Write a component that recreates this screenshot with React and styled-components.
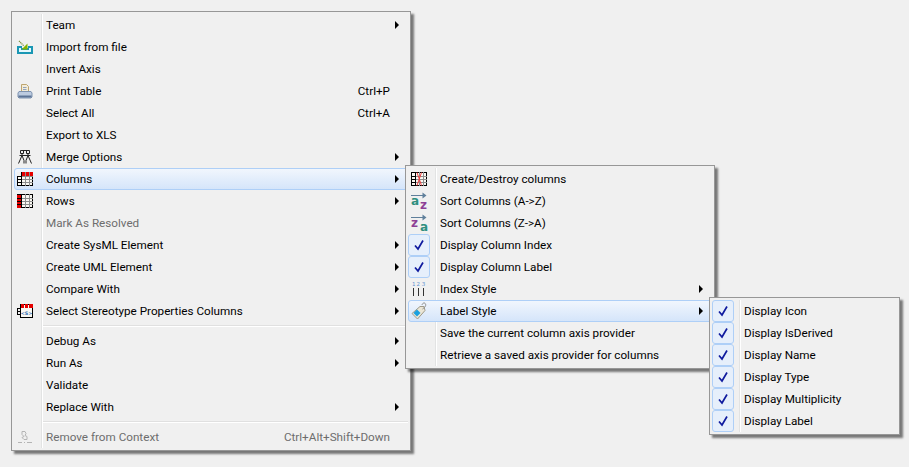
import styled, { createGlobalStyle } from 'styled-components';

const GlobalStyle = createGlobalStyle`
  html, body {
    margin: 0;
    background: #f0f0f0;
  }
  body {
    width: 909px;
    height: 467px;
    overflow: hidden;
    font-family: Roboto, "Noto Sans", sans-serif;
    font-size: 11.7px;
    color: #000;
  }
`;

const Page = styled.div`
  position: relative;
  width: 909px;
  height: 467px;
`;

const Menu = styled.div`
  position: absolute;
  left: ${(p) => p.$left}px;
  top: ${(p) => p.$top}px;
  width: ${(p) => p.$width}px;
  box-sizing: border-box;
  padding: 2px;
  border: 1px solid #979797;
  box-shadow: 3px 3px 2px rgba(0, 0, 0, 0.5);
  background:
    linear-gradient(#e2e3e3, #e2e3e3) 29px 2px / 1px calc(100% - 4px) no-repeat,
    linear-gradient(#fff, #fff) 30px 2px / 1px calc(100% - 4px) no-repeat,
    #f0f0f0;
`;

const Row = styled.div`
  display: flex;
  align-items: center;
  box-sizing: border-box;
  height: 22px;
  padding-right: 8px;
  border: 1px solid ${(p) => (p.$active ? '#aecff7' : 'transparent')};
  border-radius: 3px;
  background: ${(p) => (p.$active ? 'linear-gradient(#f1f6fd, #d5e5fa)' : 'none')};
  color: ${(p) => (p.$disabled ? '#6d6d6d' : '#000')};
  white-space: nowrap;
`;

const IconCell = styled.span`
  flex: none;
  display: flex;
  align-items: center;
  justify-content: center;
  width: 20px;
  height: 20px;
  margin-right: 11px;
`;

const CheckBox = styled.span`
  flex: none;
  display: flex;
  align-items: center;
  justify-content: center;
  box-sizing: border-box;
  width: 22px;
  height: 22px;
  margin: 0 10px 0 -1px;
  border: 1px solid #aecff7;
  border-radius: 3px;
  background: #e6effb;
`;

const Label = styled.span`
  flex: 1;
`;

const Shortcut = styled.span`
  flex: none;
  margin-right: 9px;
`;

const Arrow = styled.span`
  flex: none;
  width: 0;
  height: 0;
  border-left: 4px solid #000;
  border-top: 4px solid transparent;
  border-bottom: 4px solid transparent;
`;

const Separator = styled.div`
  height: 2px;
  margin: 3px 0 3px 29px;
  background: linear-gradient(#e0e0e0 50%, #fff 50%);
`;

const IconText = styled.text`
  font-family: "DejaVu Sans", sans-serif;
  font-weight: ${(p) => (p.$light ? 400 : 700)};
  font-size: ${(p) => p.$size}px;
  fill: ${(p) => p.$color};
`;

const ImportIcon = () => (
  <svg width="16" height="14" viewBox="0 0 16 14">
    <path d="M0 6h5v2h6V6h5v8H0z" fill="#1a97b4" />
    <path d="M2 8h2v2h8V8h2v4H2z" fill="#e4f8fc" />
    <path d="M2 1l5 5" stroke="#7c8f3c" strokeWidth="1.200" strokeDasharray="1.200 0.600" />
    <path d="M10.500 3.500v6h-6z" fill="#86b300" />
  </svg>
);

const PrintIcon = () => (
  <svg width="16" height="15" viewBox="0 0 16 15">
    <path d="M4.500 0.500h5l2 2v5h-7z" fill="#f4ecd8" stroke="#bda570" />
    <path d="M6 3.500h3.500M6 5.500h3.500" stroke="#8fa3bd" />
    <path d="M2 7.500h12l1 1.500v4l-1 1H2l-1-1V9z" fill="#bccbe0" stroke="#7e93b0" />
    <path d="M1.500 12.500h13" stroke="#5d7496" strokeWidth="2" />
  </svg>
);

const MergeIcon = () => (
  <svg width="16" height="16" viewBox="0 0 16 16" fill="none" stroke="#222">
    <path d="M3.500 1.500h9M3.500 1.500v3h3v-3M9.500 1.500v3h3v-3M5 4.500v2M11 4.500v2M2.500 6.500h11" />
    <path d="M5 6.500L1.500 14.500M5 6.500l2 5v3M11 6.500l3.500 8M11 6.500l-2 5v3" />
  </svg>
);

// shared grid, the cells in red differ from one table icon to the next
const Grid = () => (
  <>
    <rect x="0.5" y="0.5" width="15" height="13" fill="#faf8f2" stroke="#000" />
    <path d="M4 4.500h12M4 7.500h12M4 10.500h12M8.500 0v14M12.500 0v14" stroke="#8c8c8c" shapeRendering="crispEdges" />
    <path d="M4.500 0v14" stroke="#000" shapeRendering="crispEdges" />
    <path d="M0 4.500h4M0 7.500h4M0 10.500h4" stroke="#000" shapeRendering="crispEdges" />
  </>
);

const ColumnsIcon = () => (
  <svg width="16" height="14" viewBox="0 0 16 14">
    <Grid />
    <path d="M0 0h4v4H0z" fill="#f0f0f0" />
    <path d="M5 0h3v4H5zM9 0h3v4H9zM13 0h3v4h-3z" fill="#e60000" />
  </svg>
);

const RowsIcon = () => (
  <svg width="16" height="14" viewBox="0 0 16 14">
    <Grid />
    <path d="M0 1h4v3H0zM0 5h4v2H0zM0 8h4v2H0zM0 11h4v3H0z" fill="#e60000" />
  </svg>
);

const DestroyIcon = () => (
  <svg width="16" height="14" viewBox="0 0 16 14">
    <Grid />
    <path d="M6 0.500l4.500 13M10.500 0.500l-4.500 13" stroke="#f04040" fill="none" />
  </svg>
);

const StereotypeIcon = () => (
  <svg width="16" height="14" viewBox="0 0 16 14">
    <rect x="3.500" y="0.500" width="12" height="13" fill="#faf8f2" stroke="#000" />
    <path d="M0.500 4.500h3M0.500 7.500h3M0.500 10.500h3M0.500 4v7" stroke="#000" />
    <path d="M4 0h3v4H4zM8 0h3v4H8zM12 0h4v4h-4z" fill="#e60000" />
    <IconText x="9.500" y="11" textAnchor="middle" $size="4.800" $color="#2a6ab0">{'<S>'}</IconText>
  </svg>
);

const SortIcon = ({ flip }) => (
  <svg width="18" height="19" viewBox="0 0 18 19">
    <path d="M1 3.500h14" stroke="#5f7f9b" />
    <path d="M12.500 0.500l4 3-4 3z" fill="#5f7f9b" />
    <IconText x="1" y="13" $size="12" $color={flip ? '#8e3f96' : '#2f8f7f'}>{flip ? 'z' : 'a'}</IconText>
    <IconText x="10" y="17" $size="12" $color={flip ? '#2f8f7f' : '#8e3f96'}>{flip ? 'a' : 'z'}</IconText>
  </svg>
);

const IndexIcon = () => (
  <svg width="14" height="16" viewBox="0 0 14 16">
    <IconText x="0" y="5" $light $size="5.500" $color="#5f92d0">1</IconText>
    <IconText x="4.500" y="5" $light $size="5.500" $color="#5f92d0">2</IconText>
    <IconText x="9.800" y="5" $light $size="5.500" $color="#5f92d0">3</IconText>
    <path d="M1.500 7v8M6.500 7v8M11.500 7v8" stroke="#333" />
  </svg>
);

const TagIcon = () => (
  <svg width="18" height="18" viewBox="0 0 18 18">
    <path d="M2 11.500L10 4.500h4l1 4-7.500 8.500z" fill="#ebe6d6" stroke="#a09a88" />
    <path d="M7 7.500l3.500 3.500L7 14.500 3.500 11z" fill="#19a0e0" />
    <path d="M12.500 7c1.500-1 4-3 3-5s-3-1-3.500 1" fill="none" stroke="#8d8d8d" />
  </svg>
);

const RemoveIcon = () => (
  <svg width="16" height="16" viewBox="0 0 16 16" fill="none" stroke="#b4b4b4">
    <path d="M5 2.500h3l1 2-1 2 2 1v3H7L5 8.500l2-1-2-2z" />
    <path d="M1 13.500h4M7 13.500h1M10 13.500h5" />
  </svg>
);

const Check = () => (
  <svg width="12" height="12" viewBox="0 0 12 12">
    <path d="M2 6.500L5 10L10 1.500" fill="none" stroke="#0f1a9e" strokeWidth="1.700" />
  </svg>
);

const mainItems = [
  { label: 'Team', arrow: true },
  { label: 'Import from file', icon: <ImportIcon /> },
  { label: 'Invert Axis' },
  { label: 'Print Table', icon: <PrintIcon />, shortcut: 'Ctrl+P' },
  { label: 'Select All', shortcut: 'Ctrl+A' },
  { label: 'Export to XLS' },
  { label: 'Merge Options', icon: <MergeIcon />, arrow: true },
  { label: 'Columns', icon: <ColumnsIcon />, arrow: true, active: true },
  { label: 'Rows', icon: <RowsIcon />, arrow: true },
  { label: 'Mark As Resolved', disabled: true },
  { label: 'Create SysML Element', arrow: true },
  { label: 'Create UML Element', arrow: true },
  { label: 'Compare With', arrow: true },
  { label: 'Select Stereotype Properties Columns', icon: <StereotypeIcon />, arrow: true },
  { separator: true },
  { label: 'Debug As', arrow: true },
  { label: 'Run As', arrow: true },
  { label: 'Validate' },
  { label: 'Replace With', arrow: true },
  { separator: true },
  { label: 'Remove from Context', icon: <RemoveIcon />, shortcut: 'Ctrl+Alt+Shift+Down', disabled: true },
];

const columnItems = [
  { label: 'Create/Destroy columns', icon: <DestroyIcon /> },
  { label: 'Sort Columns (A->Z)', icon: <SortIcon /> },
  { label: 'Sort Columns (Z->A)', icon: <SortIcon flip /> },
  { label: 'Display Column Index', checked: true },
  { label: 'Display Column Label', checked: true },
  { label: 'Index Style', icon: <IndexIcon />, arrow: true },
  { label: 'Label Style', icon: <TagIcon />, arrow: true, active: true },
  { label: 'Save the current column axis provider' },
  { label: 'Retrieve a saved axis provider for columns' },
];

const labelItems = [
  'Display Icon',
  'Display IsDerived',
  'Display Name',
  'Display Type',
  'Display Multiplicity',
  'Display Label',
].map((label) => ({ label, checked: true }));

const MenuRows = ({ items }) =>
  items.map((item, index) =>
    item.separator ? (
      <Separator key={index} />
    ) : (
      <Row key={index} $active={item.active} $disabled={item.disabled}>
        {item.checked ? (
          <CheckBox>
            <Check />
          </CheckBox>
        ) : (
          <IconCell>{item.icon}</IconCell>
        )}
        <Label>{item.label}</Label>
        {item.shortcut && <Shortcut>{item.shortcut}</Shortcut>}
        {item.arrow && <Arrow />}
      </Row>
    )
  );

export default function App() {
  return (
    <Page>
      <GlobalStyle />
      <Menu $left={11} $top={11} $width={400}>
        <MenuRows items={mainItems} />
      </Menu>
      <Menu $left={405} $top={165} $width={310}>
        <MenuRows items={columnItems} />
      </Menu>
      <Menu $left={709} $top={297} $width={191}>
        <MenuRows items={labelItems} />
      </Menu>
    </Page>
  );
}
